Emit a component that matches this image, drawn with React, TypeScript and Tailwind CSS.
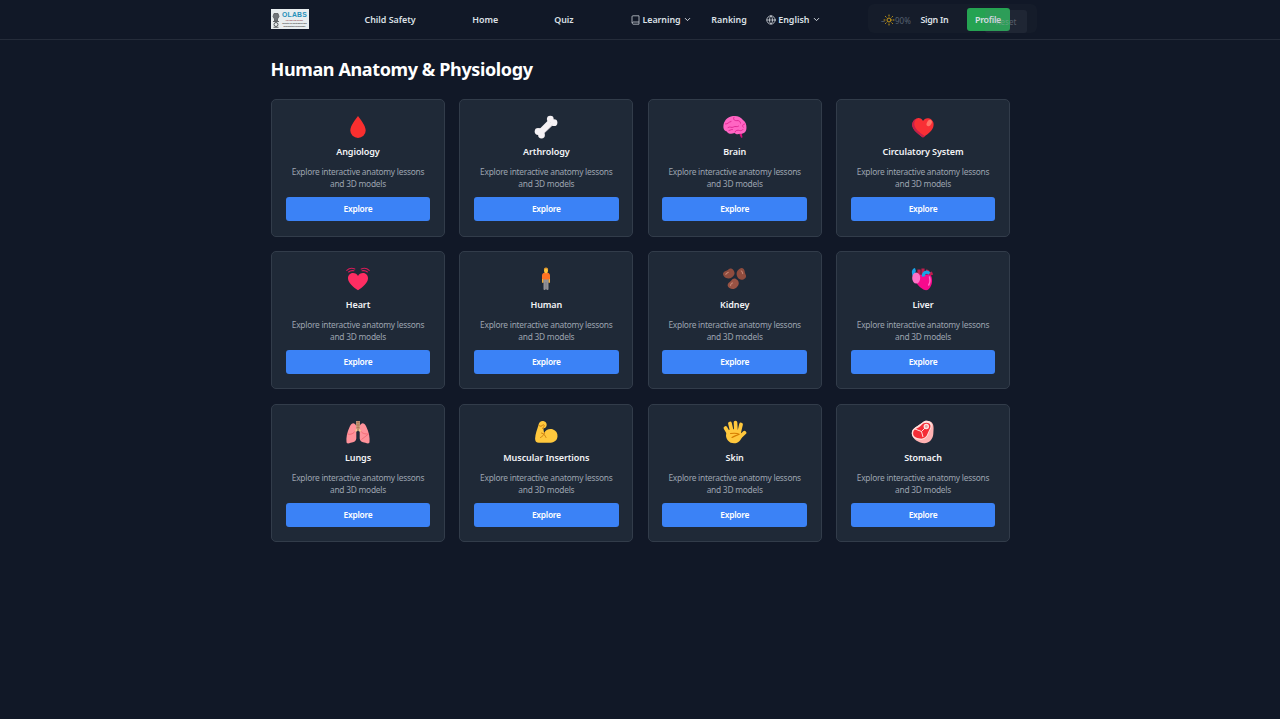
import React from "react";
import { ChevronDown, Globe, Sun } from "lucide-react";

function Drop() {
  return <path d="M12 1C10 4 4.3 10.5 4.3 15.6a7.7 7.4 0 0 0 15.4 0C19.7 10.5 14 4 12 1Z" fill="#f92f2f" />;
}

function Bone() {
  return (
    <g fill="#f5f1f4">
      <path d="M5 14.600 14.500 5 19 9.700 9.500 19Z" />
      <circle cx="4.100" cy="16.500" r="3.400" />
      <circle cx="7.500" cy="20" r="3.400" />
      <circle cx="16.300" cy="4.100" r="3.400" />
      <circle cx="20" cy="7.700" r="3.400" />
      <path d="m5 14 4 5M15 4l5 4" stroke="#f5f1f4" strokeWidth="3" />
      <path d="m10 18 8.500-8" stroke="#d3ccd2" strokeWidth=".8" />
    </g>
  );
}

function Brain() {
  return (
    <g>
      <path d="M15.500 17c1 .5 1 3.500 2.500 5.500.5.600 1.700.2 1.400-.8L18.300 16Z" fill="#d3107c" />
      <path d="M.5 13C-.3 7.500 3.500 1.600 10 1c4.500-.5 7.500.7 10 4 3 2 3.700 5.500 3.400 8.500-.1 3.500-2.800 5.500-6.400 5.300-2 .7-4 .6-5.500-.8-3.500 1.500-6.500.8-7.700-1.600C1.900 16 .8 14.700.5 13Z" fill="#ff65c3" />
      <path d="M2.500 9c2.500.2 3-2.200 5.500-2.500M11 2.200c-1.500 2.500 1 3.700 3 3.400s3.500 1 3.500 2.500M5 12.500c2-1.500 3.500.8 5.500-.5s3.200.5 5-.8M6 15.500c2-.2 2.500-1.500 3.500-1M21.500 9c-2 .2-2.500 2-1.300 3.300M12 17c.5-2 3-2 4.500-1.500s3-.3 3.500-1" fill="none" stroke="#dc2490" strokeWidth=".9" strokeLinecap="round" />
    </g>
  );
}

function RedHeart() {
  return (
    <g>
      <path d="M6.500 3.200C8.900 2.700 11 4 12 6c1.200-2.300 3.800-3.500 6.500-2.500 3.600 1.300 5.100 5.300 3.600 8.900C20.400 16.500 16 19.500 12 22.500 8 19.500 3.300 16.300 1.700 12.200.2 8.300 2.500 4 6.500 3.200Z" fill="#f92f35" />
      <path d="M6.500 3.200C2.500 4 .2 8.300 1.700 12.200 3.300 16.300 8 19.500 12 22.500l1.800-1.400C8.500 17.500 3.900 14 3.300 9.500 3 6.500 4.300 4.200 6.500 3.200Z" fill="#c4204b" />
      <ellipse cx="18.200" cy="8" rx="2.300" ry="3.500" transform="rotate(28 18.200 8)" fill="#ff7468" />
    </g>
  );
}

function BeatingHeart() {
  return (
    <g>
      <path d="M7 6c2.200 0 4.200 1.300 5 3 .8-1.700 2.800-3 5-3 3.100 0 5.200 2.500 5 5.500C21.700 16 17 20 12 23.300 7 20 2.300 16 2 11.500 1.800 8.500 3.900 6 7 6Z" fill="#ff2d62" />
      <path d="M.8 3.300C3.300 1 6 .8 8.800 2M2.600 5c1.600-1.400 3.500-1.600 5.300-1.200M23.200 3.300C20.700 1 18 .8 15.200 2M21.400 5c-1.600-1.400-3.500-1.600-5.300-1.200" fill="none" stroke="#d91b58" strokeWidth="1.100" strokeLinecap="round" />
    </g>
  );
}

function Person() {
  return (
    <g>
      <path d="M8.900 11v4M15.100 11v4" stroke="#f3ad3c" strokeWidth="1.800" strokeLinecap="round" />
      <path d="M9.500 12h5v10.300c0 .9-2 .9-2.200 0h-.6c-.2.900-2.200.9-2.200 0Z" fill="#929196" />
      <path d="M8 12V8.500C8 6.500 9.500 5.500 12 5.500s4 1 4 3V12h-1.500v.5h-5v-.5Z" fill="#ff7222" />
      <path d="M10 3c0-3 4-3 4 0s-1 3.200-2 3.200S10 6 10 3Z" fill="#fcc33b" />
      <path d="M9.900 3c-.3-3.500 4.500-3.500 4.200 0L13 1.700h-2Z" fill="#d58a2a" />
      <path d="M12 15v7" stroke="#6b6970" strokeWidth=".5" />
    </g>
  );
}

const beanPath = "M-5.300-1.500C-5.300-4.600-2.700-5.500-.5-4.500S2.500-4 4-3.500C6.800-2.500 6.500 2.500 3.500 4S-5.300 4-5.300-1.500Z";

function Beans() {
  return (
    <g>
      <g transform="translate(6 7) rotate(-43)">
        <path d={beanPath} fill="#8f4c3e" />
        <path d="M-3-1.500C-2-3-.3-1.700 1-1.600" stroke="#c88775" fill="none" />
      </g>
      <g transform="translate(18 7) rotate(60)">
        <path d={beanPath} fill="#8f4c3e" />
        <path d="M-3-1.500C-2-3-.3-1.700 1-1.600" stroke="#c88775" fill="none" />
      </g>
      <g transform="translate(10.500 17.300) rotate(-58)">
        <path d={beanPath} fill="#995344" />
        <path d="M-3-1.500C-2-3-.3-1.700 1-1.600" stroke="#c88775" fill="none" />
      </g>
    </g>
  );
}

function Organ() {
  return (
    <g>
      <path d="M8 8V2.500M12 8V1.500M15 7l2-4M17 8l4.500-2" stroke="#c21c4d" strokeWidth="3.200" />
      <path d="M4 9C2 6.500 2 3.500 4.500 2.700" stroke="#18a4e8" strokeWidth="3.500" fill="none" />
      <path d="M6 7c5 2 8-1 14 1.500 2.500 5.500.5 12-3.500 14.500-4 1-9-3.500-12-8.500Z" fill="#f70a8d" />
      <path d="M12.500 9.500c-.5-4 3-5.500 6-3" stroke="#18a4e8" strokeWidth="3.200" fill="none" />
      <ellipse cx="5.200" cy="11" rx="4" ry="5.500" fill="#ff72c7" />
      <path d="M18.500 10c.8 2.800.5 6-.8 8" stroke="#ff72c7" strokeWidth="1.500" fill="none" strokeLinecap="round" />
    </g>
  );
}

function Lungs() {
  return (
    <g>
      <path d="M10.300 6C8.500 2 5.800 2.500 3.800 6.500 1 12 0 18 .5 22c.2 2 2 1.500 4.200.8 3.500-.6 5.300-1.500 5.600-4.300ZM13.700 6c1.800-4 4.500-3.500 6.500.5C23 12 24 18 23.500 22c-.2 2-2 1.500-4.200.8-3.500-.6-5.300-1.500-5.600-4.300Z" fill="#ff929a" />
      <path d="M1.500 14c3 1 6.500-.5 8-3.500M22.500 14c-2 2-5 3.500-7 5.500M14.500 11c2.500 3 5 3 8 3" stroke="#ee626d" strokeWidth=".8" fill="none" />
      <path d="M10.300 1h3.400v8l1.800 2.500H13L12 10l-1 1.500H8.500L10.300 9Z" fill="#f5c695" />
      <path d="M10.300 2.500h3.400M10.300 5h3.400M10.300 7.500h3.400" stroke="#b75e46" strokeWidth=".4" />
      <path d="M12 1v9" stroke="#704030" strokeWidth=".8" />
    </g>
  );
}

function Biceps() {
  return (
    <g>
      <path d="M4.500 5C5 2 7.500.5 10 1.300c2.500.8 3.300 3.200 2.300 5.200-.8 1.500-2.200 1.600-3 2l.8 4.500c1.600-3.300 5-4.800 8.500-3.800 3.500 1.100 5.200 4 4.900 7.300-.4 4.500-4 6.300-8.500 6.300H5c-2.800 0-4-1.500-3.900-4.300C1.300 13.500 3.300 9.500 4.500 5Z" fill="#ffc83d" />
      <path d="M5 5.500c1.500 1.500 3 .8 3.500-.5 1-.8 2.300.2 1.500 1.400L8.500 8.500M7.500 13c2.500.5 3.500 2.500 4.500 4.500M10.500 13c0 2-2 3-4 4.500" stroke="#c97a0d" strokeWidth=".9" fill="none" strokeLinecap="round" />
    </g>
  );
}

function Hand() {
  return (
    <g>
      <path d="m6 14-3.500-6M9 12 7 3.500M13 12l-.5-9.500M16 13l2-8.500M17 17l4.500-4.300" stroke="#ffc83d" strokeWidth="3.700" strokeLinecap="round" />
      <path d="M4 11c3-2 9-2.500 13 0l2.500 4c-1 4.700-4 8.300-8.500 8.300C6 23.300 3 19.500 3 15Z" fill="#ffc83d" />
      <path d="M7.500 13.500c3.500-.5 7-.3 8.500.7-2.500 1.500-4.500 1.500-7 3.300" stroke="#d67d00" strokeWidth="1.100" fill="none" strokeLinecap="round" />
    </g>
  );
}

function Meat() {
  return (
    <g>
      <path d="M11.500 2.500c3-3 8.500-1.500 10 1 1.800 3 .8 7.500.8 10.500-.4 5.500-4.500 9.400-9 9.300C8 23.200 1 19 .8 13.500.5 8 7 6.500 11.500 2.500Z" fill="#ffb2b2" />
      <path d="M11.500 2.500c3-3 8-1.500 9 1 1.400 3.500-1.800 6.500-3 10-1.300 4-4.500 6.500-8.500 6.300C4.500 19.500 1 17.500.8 13.500.5 8 7 6.500 11.500 2.500Z" fill="#ffe3df" />
      <path d="M10.500 5c2.500-3 7.500-3 8.700-.3 1.200 2.800-1.700 5.800-2.700 9.100-1 3.400-3.700 5.200-7.500 4.800-4-.4-6.900-2-6.900-5.300C2.100 8.800 7.500 8.500 10.500 5Z" fill="#f52d36" />
      <path d="m4 9 6.500 2.500L14 8M10.500 11.500 12 17" stroke="#ffe3df" strokeWidth="1" fill="none" />
      <circle cx="15.300" cy="6.500" r="2.700" fill="#ffe3df" />
      <circle cx="15.300" cy="6.500" r="1.400" fill="#e2a4a4" />
    </g>
  );
}

const topics = [
  { name: "Angiology", Art: Drop },
  { name: "Arthrology", Art: Bone },
  { name: "Brain", Art: Brain },
  { name: "Circulatory System", Art: RedHeart },
  { name: "Heart", Art: BeatingHeart },
  { name: "Human", Art: Person },
  { name: "Kidney", Art: Beans },
  { name: "Liver", Art: Organ },
  { name: "Lungs", Art: Lungs },
  { name: "Muscular Insertions", Art: Biceps },
  { name: "Skin", Art: Hand },
  { name: "Stomach", Art: Meat },
];

function Logo() {
  return (
    <div className="flex h-5 w-[38px] shrink-0 overflow-hidden bg-[#e8edef]">
      <svg viewBox="0 0 10 20" className="h-5 w-[10px] shrink-0" fill="none" stroke="#55595c">
        <path d="M3 4.500h4l1 3-1.500 2.500v2h-3v-2L2 7.500Z" fill="#70757a" strokeWidth=".8" />
        <path d="M2 12.500h6M2.500 18.300h5" strokeWidth=".9" />
        <circle cx="5" cy="15.500" r="2" />
      </svg>
      <div className="flex w-[28px] flex-col items-center pt-[3px] whitespace-nowrap">
        <span className="h-[7px] font-['Liberation_Sans',sans-serif] text-[6.800px] leading-[6px] font-bold tracking-[0.200px] text-[#2590ba]">OLABS</span>
        <span className="h-[3px] text-[2.200px] leading-[3px] font-semibold text-[#8b3a3a]">LEARN TO EXCEL</span>
        <span className="h-[3px] text-[1.900px] leading-[3px] text-[#333333]">Ministry of Electronics and</span>
        <span className="h-[3px] text-[1.900px] leading-[3px] text-[#333333]">Information Technology</span>
      </div>
    </div>
  );
}

function Header() {
  return (
    <header className="relative h-10 border-b border-[#252c3a] bg-[#111827]">
      <div className="absolute top-1 left-[868px] h-[29px] w-[169px] rounded-md bg-[#151c2a]" />
      <div className="relative mx-auto flex h-[39px] w-[739px] items-center pt-px text-[8.900px] font-semibold whitespace-nowrap text-[#dce0e6]">
        <div className="-mt-[2px]">
          <Logo />
        </div>
        <a className="ml-[56px] w-[108px]">Child Safety</a>
        <a className="w-[82px]">Home</a>
        <a className="w-[77.500px]">Quiz</a>
        <a className="flex w-[80px] items-center">
          <svg viewBox="0 0 9 10" className="mr-[2px] h-[10px] w-[9px]" fill="none" stroke="#c5cad2" strokeWidth=".8">
            <path d="M1 8V1.800C1 1 1.300.8 2 .8h6v8.400H2A1.200 1.200 0 0 1 2 7h6" />
          </svg>
          <span className="w-[41px] tracking-[-0.050px]">Learning</span>
          <ChevronDown size={9} strokeWidth={2.500} />
        </a>
        <a className="w-[55px]">Ranking</a>
        <a className="flex w-[117px] items-center">
          <Globe size={10} strokeWidth={1.800} className="mr-[2px]" />
          <span className="w-[34px]">English</span>
          <ChevronDown size={9} strokeWidth={2.500} />
        </a>
        <Sun size={12} strokeWidth={2} className="shrink-0 text-[#c99a16]" />
        <a className="ml-[25.500px] w-[46px] shrink-0 tracking-[-0.300px]">Sign In</a>
        <button className="-mt-px h-[23px] w-[43px] shrink-0 rounded-[3px] bg-[#25a352] text-center tracking-[-0.300px]">Profile</button>
      </div>
      <div className="absolute top-[14px] left-[881px] text-[8px] leading-[14px] text-[#566070]">
        –<span className="ml-[10px]">90%</span>
      </div>
      <div className="absolute top-[10px] left-[985px] flex h-[23px] w-[42px] items-center justify-center rounded-[3px] bg-[#6b7280]/12 text-[8px] text-[#a0a8b0]/45">
        Reset
      </div>
    </header>
  );
}

export default function App() {
  return (
    <div className="h-[719px] overflow-hidden bg-[#111827] font-['Noto_Sans','Open_Sans',sans-serif]">
      <Header />
      <main className="mx-auto w-[739px] pt-[17px]">
        <h1 className="h-[41.600px] text-[18px] leading-[25px] font-bold tracking-[-0.380px] whitespace-nowrap text-white">Human Anatomy &amp; Physiology</h1>
        <div className="ml-[0.500px] grid w-[739px] grid-cols-4 gap-x-[14.400px] gap-y-[14.700px]">
          {topics.map(({ name, Art }) => (
            <section key={name} className="flex h-[138px] flex-col items-center rounded-[5px] border border-[#323c4a] bg-[#1f2937] px-[13.700px] pt-[15px]">
              <svg viewBox="0 0 24 24" className="size-[24px] shrink-0">
                <Art />
              </svg>
              <h2 className="mt-[6.600px] text-[9px] leading-[14px] font-semibold tracking-[-0.080px] whitespace-nowrap text-[#f3f4f6]">{name}</h2>
              <p className="mt-[7.200px] h-[24px] text-center text-[8.400px] leading-[12px] tracking-[-0.250px] whitespace-nowrap text-[#9ca3af]">
                Explore interactive anatomy lessons
                <br />
                and 3D models
              </p>
              <button className="mt-[7.100px] h-[24px] w-full rounded-[3px] bg-[#3b82f6] text-center text-[8.400px] leading-[24px] font-semibold tracking-[-0.250px] text-white">Explore</button>
            </section>
          ))}
        </div>
      </main>
    </div>
  );
}
